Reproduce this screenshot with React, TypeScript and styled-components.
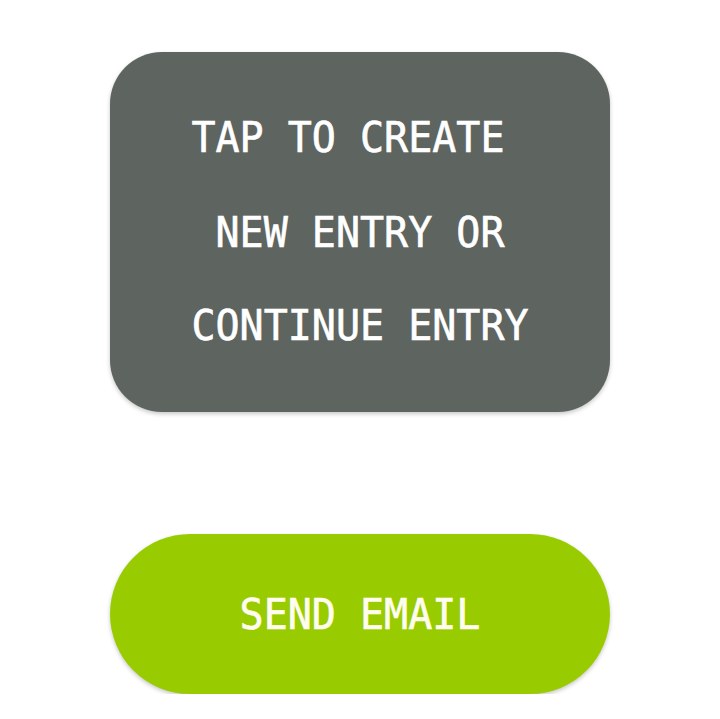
import React from "react";
import styled, { createGlobalStyle } from "styled-components";

const Global = createGlobalStyle`
  html, body { margin: 0; padding: 0; background: #ffffff; }
  body { font-family: "DejaVu Sans Mono", "Liberation Mono", monospace; }
`;

const Page = styled.main`
  display: flex;
  flex-direction: column;
  align-items: center;
  padding-top: 52px;
  gap: 122px;
`;

const EntryCard = styled.button`
  width: 500px;
  height: 360px;
  border: none;
  border-radius: 52px;
  background: #5e6460;
  box-shadow: 0 2px 4px rgba(0, 0, 0, 0.22);
  display: flex;
  align-items: center;
  justify-content: center;
  padding: 0;
  cursor: pointer;
`;

const CardText = styled.span`
  font-family: "DejaVu Sans Mono", "Liberation Mono", monospace;
  font-size: 40px;
  line-height: 89.5px;
  color: #ffffff;
  -webkit-text-stroke: 0.6px #ffffff;
  white-space: pre;
  text-align: left;
  display: block;
  transform: scaleY(1.05);
`;

const SendButton = styled.button`
  width: 500px;
  height: 160px;
  border: none;
  border-radius: 80px;
  background: #99cc00;
  box-shadow: 0 2px 4px rgba(0, 0, 0, 0.22);
  display: flex;
  align-items: center;
  justify-content: center;
  padding: 0;
  cursor: pointer;
`;

const ButtonText = styled.span`
  font-family: "DejaVu Sans Mono", "Liberation Mono", monospace;
  font-size: 40px;
  color: #fffdf0;
  -webkit-text-stroke: 0.6px #fffdf0;
  display: block;
  transform: scaleY(1.05);
`;

export default function App() {
  return (
    <>
      <Global />
      <Page>
        <EntryCard>
          <CardText>{"TAP TO CREATE \n NEW ENTRY OR \nCONTINUE ENTRY"}</CardText>
        </EntryCard>
        <SendButton>
          <ButtonText>SEND EMAIL</ButtonText>
        </SendButton>
      </Page>
    </>
  );
}
